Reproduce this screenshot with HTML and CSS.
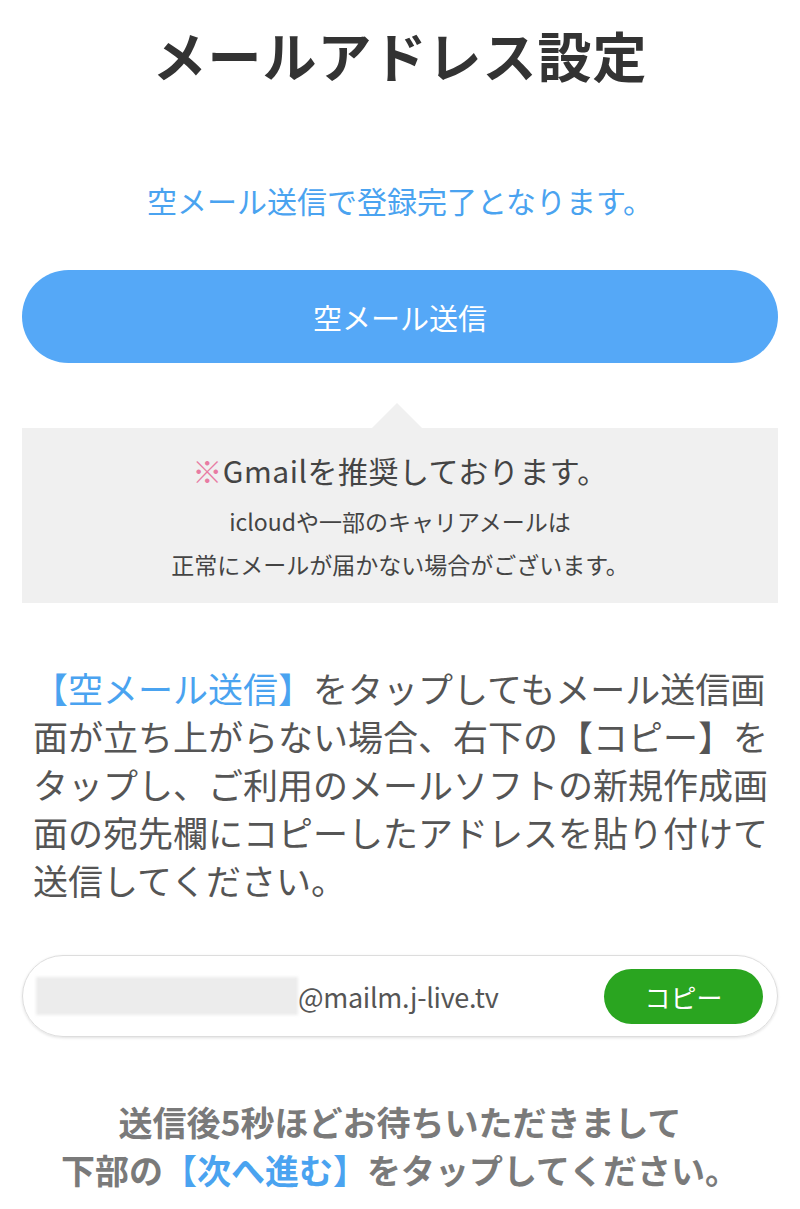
FILE: index.html
```html
<!DOCTYPE html>
<html lang="ja">

<head>
  <meta charset="UTF-8" />
  <meta name="viewport" content="width=device-width, initial-scale=1.0" />
  <title>メールアドレス設定</title>
  <link rel="stylesheet" href="styles.css">
</head>

<body>
  <div class="w">
    <!-- タイトル -->
    <h1 class="title">メールアドレス設定</h1>
    <p class="lead">空メール送信で登録完了となります。</p>

    <!-- 送信ボタン -->
    <a class="send-btn" href="#">空メール送信</a>

    <!-- 注意 -->
    <div class="notice">
      <p class="notice-main"><span class="mark">※</span>Gmailを推奨しております。</p>
      <p class="notice-sub">icloudや一部のキャリアメールは</p>
      <p class="notice-sub">正常にメールが届かない場合がございます。</p>
    </div>

    <!-- 説明 -->
    <div class="guide">
      <span class="line"><span class="blue">【空メール送信】</span>をタップしてもメール送信画</span>
      <span class="line">面が立ち上がらない場合、右下の【コピー】を</span>
      <span class="line">タップし、ご利用のメールソフトの新規作成画</span>
      <span class="line">面の宛先欄にコピーしたアドレスを貼り付けて</span>
      <span class="line">送信してください。</span>
    </div>

    <!-- アドレス -->
    <div class="address">
      <span class="hidden-id"></span>
      <span class="domain">@mailm.j-live.tv</span>
      <button class="copy">コピー</button>
    </div>

    <!-- 次へ -->
    <div class="after">
      <span class="line">送信後5秒ほどお待ちいただきまして</span>
      <span class="line">下部の<span class="blue">【次へ進む】</span>をタップしてください。</span>
    </div>
  </div>
</body>

</html>
```

FILE: styles.css
```css
* {
  margin: 0;
  padding: 0;
  box-sizing: border-box;
}

body {
  font-family: "Noto Sans CJK JP", "Noto Sans", sans-serif;
  background: #fff;
  color: #555;
}

.w {
  width: 800px;
  padding: 20px 22px 0;
}

.title {
  font-size: 54px;
  line-height: 70px;
  font-weight: bold;
  color: #333;
  text-align: center;
  letter-spacing: 1px;
}

.lead {
  margin-top: 90px;
  font-size: 30px;
  line-height: 40px;
  color: #4aa3f0;
  text-align: center;
}

.send-btn {
  display: flex;
  align-items: center;
  justify-content: center;
  margin-top: 50px;
  height: 93px;
  border-radius: 47px;
  background: #55a8f7;
  color: #fff;
  font-size: 29px;
  text-decoration: none;
}

.notice {
  position: relative;
  margin-top: 65px;
  padding: 22px 0 17px;
  background: #f0f0f0;
  text-align: center;
}

.notice::before {
  content: "";
  position: absolute;
  top: -25px;
  left: 350px;
  border-left: 25px solid transparent;
  border-right: 25px solid transparent;
  border-bottom: 25px solid #f0f0f0;
}

.notice-main {
  font-size: 30px;
  line-height: 40px;
  color: #444;
  margin-bottom: 10px;
  letter-spacing: 0.5px;
}

.notice-main .mark {
  color: #e87ca3;
}

.notice-sub {
  font-size: 23px;
  line-height: 43px;
  color: #444;
}

.guide {
  margin-top: 61px;
  padding-left: 11px;
  font-size: 35px;
  line-height: 48px;
  color: #555;
}

.line {
  display: block;
  white-space: nowrap;
}

.blue {
  color: #4aa3f0;
}

.address {
  display: flex;
  align-items: center;
  margin-top: 51px;
  height: 82px;
  padding: 0 14px 0 13px;
  border: 1px solid #ddd;
  border-radius: 41px;
  box-shadow: 0 1px 3px rgba(0, 0, 0, 0.12);
}

.hidden-id {
  width: 262px;
  height: 38px;
  background: #ececec;
  filter: blur(1.5px);
}

.domain {
  flex: 1;
  font-size: 27px;
  color: #555;
  letter-spacing: -0.3px;
}

.copy {
  width: 159px;
  height: 55px;
  border: none;
  border-radius: 28px;
  background: #2aa520;
  color: #fff;
  font: 26px "Noto Sans CJK JP", sans-serif;
}

.after {
  margin-top: 61px;
  font-size: 34px;
  line-height: 48px;
  font-weight: bold;
  color: #7a7a7a;
  text-align: center;
}
```
